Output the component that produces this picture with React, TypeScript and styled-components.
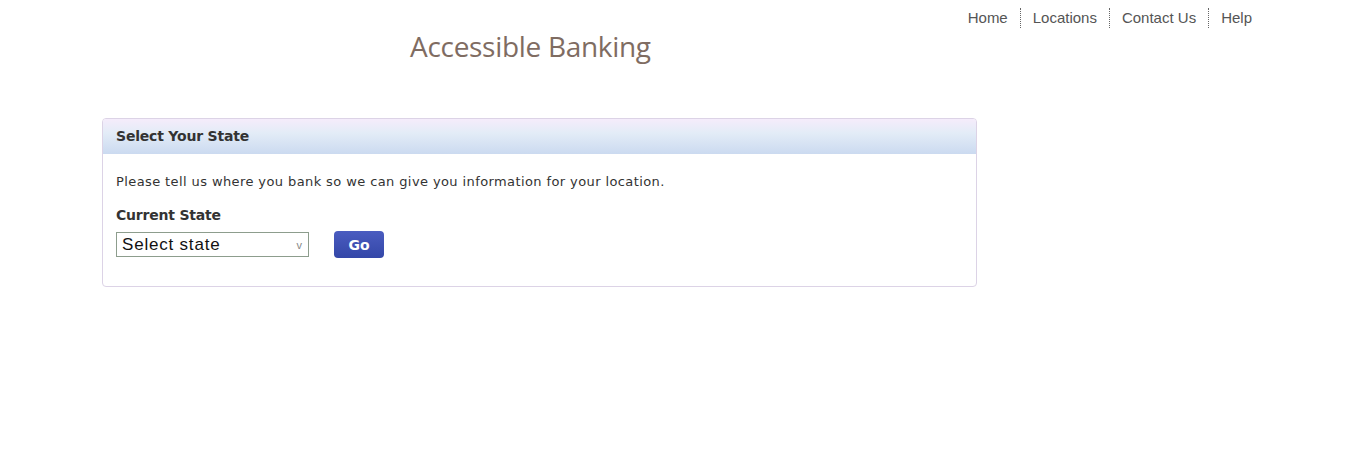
import styled, { createGlobalStyle } from "styled-components";

const GlobalStyle = createGlobalStyle`
  body {
    margin: 0;
    background: #fff;
    font-family: "DejaVu Sans", Verdana, sans-serif;
  }
`;

const navItems = ["Home", "Locations", "Contact Us", "Help"];

function App() {
  return (
    <Page>
      <GlobalStyle />
      <TopNav>
        {navItems.map((item, i) => (
          <NavLink key={item} $first={i === 0}>
            {item}
          </NavLink>
        ))}
      </TopNav>
      <Title>Accessible Banking</Title>
      <Panel>
        <PanelHeader>Select Your State</PanelHeader>
        <PanelBody>
          <Intro>Please tell us where you bank so we can give you information for your location.</Intro>
          <Label>Current State</Label>
          <FormRow>
            <StateSelect>
              <span>Select state</span>
              <Chevron>v</Chevron>
            </StateSelect>
            <GoButton>Go</GoButton>
          </FormRow>
        </PanelBody>
      </Panel>
    </Page>
  );
}

const Page = styled.div`
  width: 1365px;
  min-height: 463px;
`;

const TopNav = styled.nav`
  display: flex;
  justify-content: flex-end;
  padding: 8px 113px 0 0;
  height: 20px;
`;

const NavLink = styled.a<{ $first: boolean }>`
  font-family: "Liberation Sans", Arial, sans-serif;
  font-size: 15px;
  line-height: 20px;
  color: #555;
  padding: 0 12px 0 12px;
  border-left: ${(p) => (p.$first ? "none" : "1px dotted #666")};
  &:last-child {
    padding-right: 0;
  }
`;

const Title = styled.h1`
  margin: 0 0 0 410px;
  font-family: "Open Sans", sans-serif;
  font-weight: 400;
  font-size: 28px;
  line-height: 36px;
  color: #7f6c62;
  letter-spacing: -0.3px;
`;

const Panel = styled.section`
  margin: 54px 0 0 102px;
  width: 873px;
  border: 1px solid #dcd3e6;
  border-radius: 4px;
  overflow: hidden;
`;

const PanelHeader = styled.h2`
  margin: 0;
  height: 35px;
  line-height: 34px;
  padding-left: 13px;
  font-size: 14px;
  letter-spacing: -0.2px;
  font-weight: bold;
  color: #333;
  background: linear-gradient(#f5ecfb, #e3ecf7 40%, #cbdaf0);
`;

const PanelBody = styled.div`
  padding: 18px 13px 28px;
`;

const Intro = styled.p`
  margin: 0 0 14px;
  font-size: 13px;
  letter-spacing: 0.4px;
  line-height: 20px;
  color: #333;
`;

const Label = styled.div`
  font-size: 14px;
  letter-spacing: -0.2px;
  font-weight: bold;
  color: #333;
  line-height: 18px;
  margin-bottom: 7px;
`;

const FormRow = styled.div`
  display: flex;
  align-items: center;
  gap: 25px;
`;

const StateSelect = styled.div`
  box-sizing: border-box;
  width: 193px;
  height: 25px;
  border: 1px solid #8d9d8d;
  display: flex;
  align-items: center;
  justify-content: space-between;
  padding: 0 6px 0 5px;
  font-family: "Liberation Sans", Arial, sans-serif;
  font-size: 17px;
  letter-spacing: 0.8px;
  color: #111;
`;

const Chevron = styled.span`
  font-size: 11px;
  letter-spacing: 0;
  color: #888;
`;

const GoButton = styled.button`
  width: 50px;
  height: 27px;
  border: none;
  border-radius: 4px;
  background: linear-gradient(#4a5cc0, #3447a8);
  color: #fff;
  font-family: "DejaVu Sans", Verdana, sans-serif;
  font-size: 14px;
  font-weight: bold;
  padding: 0;
`;

export default App;
